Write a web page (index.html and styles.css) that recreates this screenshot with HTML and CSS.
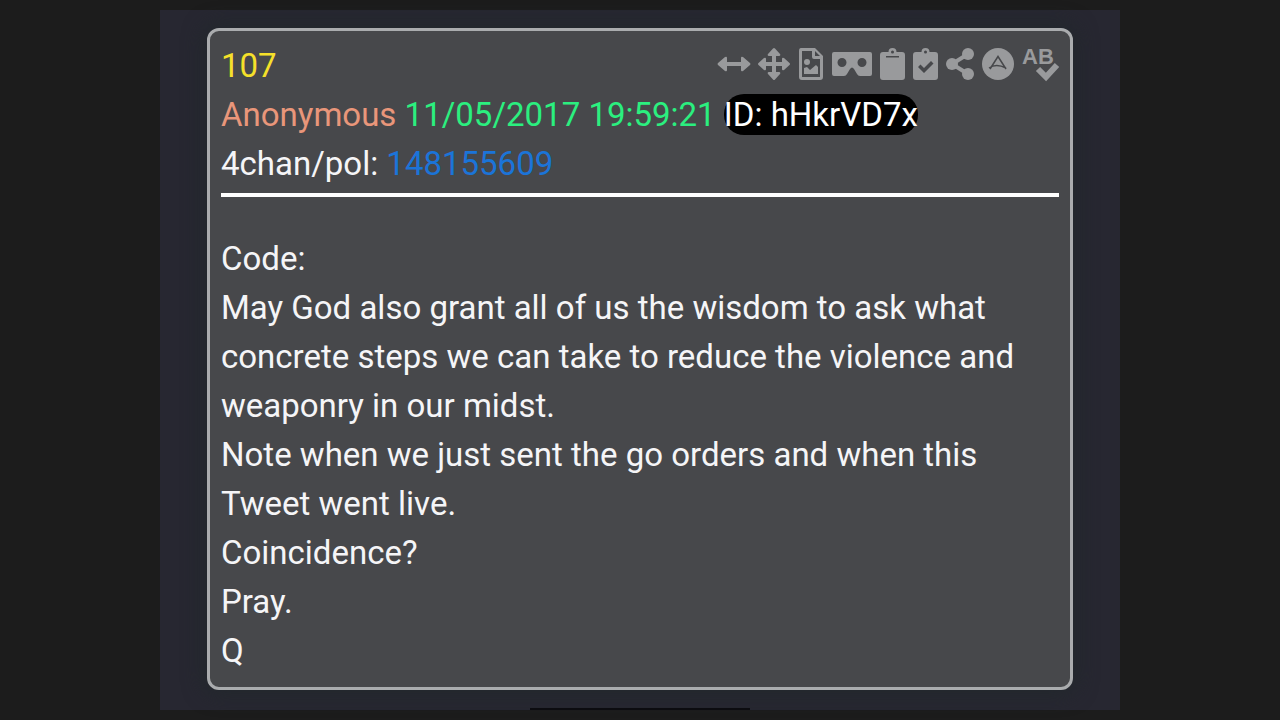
FILE: index.html
```
<!DOCTYPE html>
<html lang="en">
<head>
    <meta charset="UTF-8">
    <meta name="viewport" content="width=device-width, initial-scale=1.0">
    <title>Post 107</title>
    <link rel="stylesheet" href="styles.css">
</head>
<body>
    <main class="page">
        <article class="post">
            <header class="post-header">
                <div class="post-top">
                    <a class="post-number" href="#107">107</a>
                    <div class="tools">
                        <button class="tool" type="button" aria-label="Widen">
                            <svg width="32" height="32" viewBox="0 0 32 32"><path d="M9 10v4h14v-4q0-2 2-1l7 6q1 1 0 2l-7 6q-2 1-2-1v-4H9v4q0 2-2 1l-7-6q-1-1 0-2l7-6q2-1 2 1z"/></svg>
                        </button>
                        <button class="tool" type="button" aria-label="Move">
                            <svg width="32" height="32" viewBox="0 0 32 32"><path d="M15 0.5q1-1 2 0l5 5.500q1 2-1 2h-3v6h6v-3q0-2 2-1l5.500 5q1 1 0 2L26 22q-2 1-2-1v-3h-6v6h3q2 0 1 2l-5 5.500q-1 1-2 0L10 26q-1-2 1-2h3v-6H8v3q0 2-2 1L.5 17q-1-1 0-2L6 10q2-1 2 1v3h6V8h-3q-2 0-1-2z"/></svg>
                        </button>
                        <button class="tool" type="button" aria-label="Image">
                            <svg width="26" height="32" viewBox="0 0 26 32"><path fill-rule="evenodd" d="M3 0h14l8 8v21q0 3-3 3H4q-3 0-3-3V3q0-3 2-3zM4 3v26h18V11h-6q-2 0-2-2V3zm13 0v5h5z"/><circle cx="9" cy="14" r="3"/><path d="M6 26v-6l3-1 3 3 6-5 2 2v7z"/></svg>
                        </button>
                        <button class="tool" type="button" aria-label="Viewer">
                            <svg width="40" height="32" viewBox="0 0 40 32"><path fill-rule="evenodd" d="M2 4h36q2 0 2 2v20q0 2-2 2H28q-2 0-3-2l-3-5q-2-3-4 0l-3 5q-1 2-3 2H2q-2 0-2-2V6q0-2 2-2zm8 6a4.500 4.500 0 1 0 0 9 4.500 4.500 0 0 0 0-9zm20 0a4.500 4.500 0 1 0 0 9 4.500 4.500 0 0 0 0-9z"/></svg>
                        </button>
                        <button class="tool" type="button" aria-label="Copy">
                            <svg width="25" height="32" viewBox="0 0 25 32"><path fill-rule="evenodd" d="M3 4h5.500a4 4 0 0 1 8 0H22q3 0 3 3v22q0 3-3 3H3q-3 0-3-3V7q0-3 3-3zm9.500-1.500a1.500 1.500 0 1 0 0 3 1.500 1.500 0 0 0 0-3zM6 8v1.500h13V8z"/></svg>
                        </button>
                        <button class="tool" type="button" aria-label="Copy and mark">
                            <svg width="25" height="32" viewBox="0 0 25 32"><path fill-rule="evenodd" d="M3 4h5.500a4 4 0 0 1 8 0H22q3 0 3 3v22q0 3-3 3H3q-3 0-3-3V7q0-3 3-3zm9.500-1.500a1.500 1.500 0 1 0 0 3 1.500 1.500 0 0 0 0-3zM5 19l6 6 9.500-9.500-2.500-2.500-7 7-3.500-3.500z"/></svg>
                        </button>
                        <button class="tool" type="button" aria-label="Share">
                            <svg width="28" height="32" viewBox="0 0 28 32"><path class="line" d="M22 6L6 16l16 10"/><circle cx="22" cy="6" r="6"/><circle cx="6" cy="16" r="6"/><circle cx="22" cy="26" r="6"/></svg>
                        </button>
                        <button class="tool" type="button" aria-label="Archive">
                            <svg width="32" height="32" viewBox="0 0 32 32"><circle cx="16" cy="16" r="16"/><path class="mark" d="M8 21l8-12.500 8 12.500M7 20q7-5 17 0"/></svg>
                        </button>
                        <button class="tool" type="button" aria-label="Spell check">
                            <svg width="37" height="32" viewBox="0 0 37 32"><text class="letters" x="0" y="16">AB</text><path class="tick" d="M16 21l8 8 11-12"/></svg>
                        </button>
                    </div>
                </div>
                <div class="post-meta">
                    <span class="name">Anonymous</span>
                    <time class="date" datetime="2017-11-05T19:59:21">11/05/2017 19:59:21</time>
                    <span class="user-id">ID: hHkrVD7x</span>
                </div>
                <div class="post-source">4chan/pol: <a href="#148155609">148155609</a></div>
            </header>
            <div class="post-body">
                <p>Code:</p>
                <p>May God also grant all of us the wisdom to ask what concrete steps we can take to reduce the violence and weaponry in our midst.</p>
                <p>Note when we just sent the go orders and when this Tweet went live.</p>
                <p>Coincidence?</p>
                <p>Pray.</p>
                <p>Q</p>
            </div>
        </article>
    </main>
</body>
</html>
```
FILE: styles.css
```
:root {
    --frame-color: #1c1c1c;
    --page-color: #272731;
    --post-color: #47484b;
    --border-color: #aaacae;
    --icon-color: #999a9c;
    --text-color: #f5f5f7;
}

* {
    margin: 0;
    padding: 0;
    box-sizing: border-box;
}

body {
    font-family: Roboto, Arial, sans-serif;
    font-size: 33px;
    line-height: 49px;
    background-color: var(--frame-color);
    color: var(--text-color);
    padding: 10px 12.5%;
}

a {
    text-decoration: none;
}

.page {
    position: relative;
    background-color: var(--page-color);
    padding: 18px 47px 20px;
}

/* dark bar at the bottom edge */
.page::after {
    content: "";
    position: absolute;
    left: 50%;
    bottom: 0;
    width: 220px;
    height: 2px;
    margin-left: -110px;
    background-color: #0c0c10;
}

.post {
    background-color: var(--post-color);
    border: 3px solid var(--border-color);
    border-radius: 12px;
    box-shadow: 0 0 20px 4px #22282c;
    padding: 10px 11px 12px;
}

.post-header {
    border-bottom: 4px solid #fff;
    padding-bottom: 5px;
    margin-bottom: 37px;
}

.post-top {
    display: flex;
    justify-content: space-between;
    align-items: flex-start;
}

.post-number {
    color: #f5e02a;
}

.tools {
    display: flex;
    gap: 8px;
    padding-top: 7px;
}

.tool {
    display: flex;
    background: none;
    border: none;
    cursor: pointer;
}

.tool svg {
    fill: var(--icon-color);
    overflow: visible;
}

.tool .line,
.tool .tick {
    fill: none;
    stroke: var(--icon-color);
    stroke-width: 4;
}

.tool .tick {
    stroke-width: 6;
}

.tool .mark {
    fill: none;
    stroke: var(--post-color);
    stroke-width: 1.5;
}

.tool .letters {
    font-size: 22px;
    font-weight: 700;
    line-height: 16px;
}

.name {
    color: #e9967a;
}

.date {
    color: #2bef7f;
}

.user-id {
    background-color: #000;
    color: #fff;
    border-radius: 20px;
    padding: 1px 0;
}

.post-source a {
    color: #1b74d8;
}
```
